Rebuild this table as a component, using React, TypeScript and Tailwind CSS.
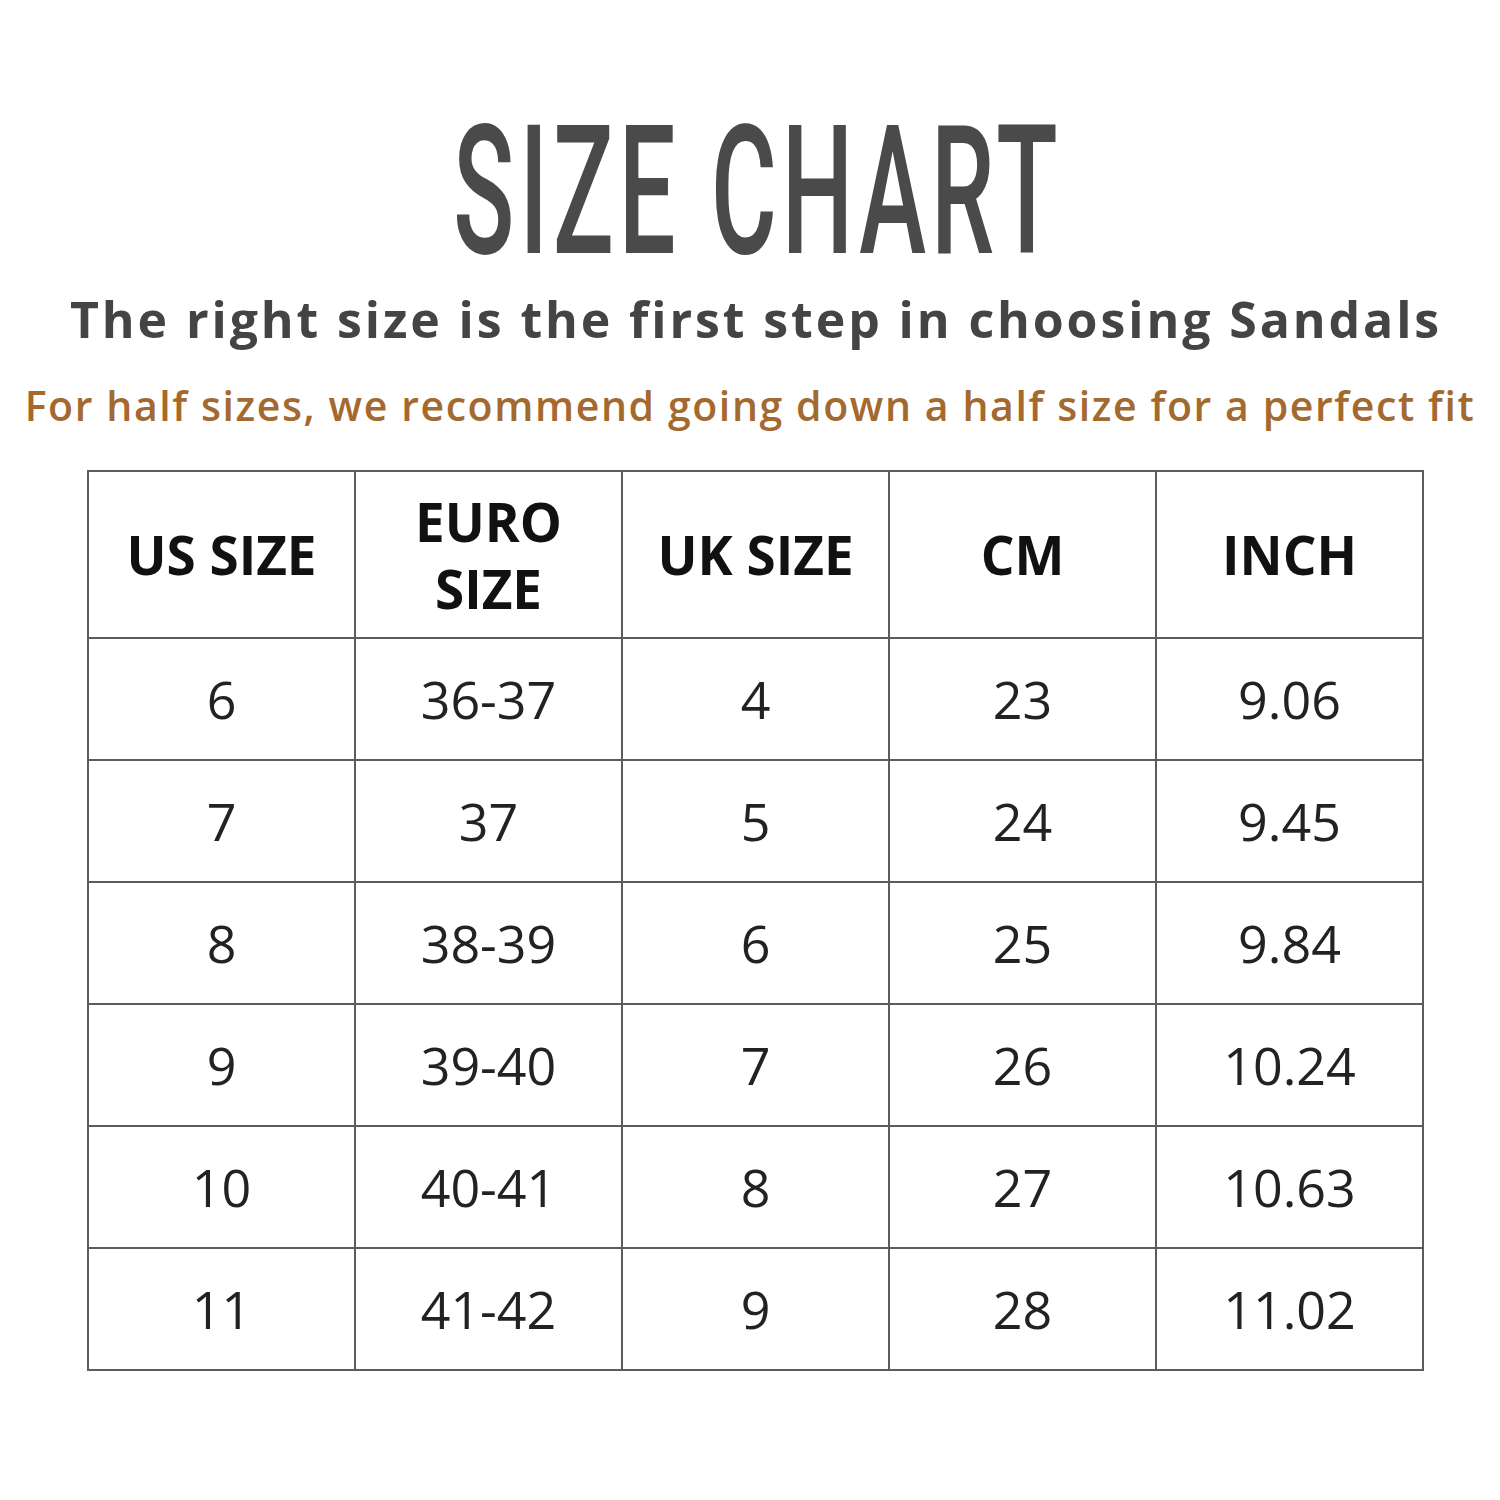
import React from 'react';

const headers = [['US SIZE'], ['EURO', 'SIZE'], ['UK SIZE'], ['CM'], ['INCH']];

const rows = [
  ['6', '36-37', '4', '23', '9.06'],
  ['7', '37', '5', '24', '9.45'],
  ['8', '38-39', '6', '25', '9.84'],
  ['9', '39-40', '7', '26', '10.24'],
  ['10', '40-41', '8', '27', '10.63'],
  ['11', '41-42', '9', '28', '11.02'],
];

export default function App() {
  return (
    <div className="w-[1500px] h-[1500px] bg-white flex flex-col items-center font-['Open_Sans',sans-serif]">
      <h1 className="mt-[99px] ml-[15px] h-[186px] flex items-center justify-center text-[180px] leading-none tracking-[9px] font-['Roboto',sans-serif] font-medium text-[#4a4a4a] scale-x-[0.56] whitespace-nowrap">
        SIZE CHART
      </h1>
      <p className="mt-[4px] ml-[12px] text-[50px] leading-[60px] tracking-[2.9px] font-bold text-[#444444] whitespace-nowrap">
        The right size is the first step in choosing Sandals
      </p>
      <p className="mt-[30px] text-[41px] leading-[52px] tracking-[1.6px] font-semibold text-[#a3692f] whitespace-nowrap">
        For half sizes, we recommend going down a half size for a perfect fit
      </p>
      <table className="mt-[39px] ml-[11px] border-collapse border-2 border-[#5c5c5c]">
        <thead>
          <tr className="h-[167px]">
            {headers.map((h, i) => (
              <th key={i} className="w-[267px] border-2 border-[#5c5c5c] text-[53px] leading-[67px] font-bold text-[#111111] text-center align-middle">
                {h.map((line) => (
                  <div key={line}>{line}</div>
                ))}
              </th>
            ))}
          </tr>
        </thead>
        <tbody>
          {rows.map((r, i) => (
            <tr key={i} className="h-[122px]">
              {r.map((c, j) => (
                <td key={j} className="w-[267px] border-2 border-[#5c5c5c] text-[52px] font-normal text-[#222222] text-center align-middle">
                  {c}
                </td>
              ))}
            </tr>
          ))}
        </tbody>
      </table>
    </div>
  );
}
